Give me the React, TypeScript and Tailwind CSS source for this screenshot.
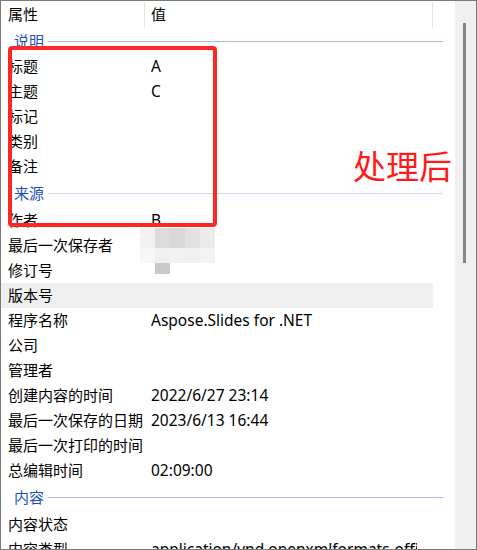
type Item = { label: string; value?: string; active?: boolean };
type Group = { title: string; line: string; first?: boolean; items: Item[] };

const groups: Group[] = [
  {
    title: "说明",
    line: "bg-[#a9bce6]",
    first: true,
    items: [
      { label: "标题", value: "A" },
      { label: "主题", value: "C" },
      { label: "标记" },
      { label: "类别" },
      { label: "备注" },
    ],
  },
  {
    title: "来源",
    line: "bg-[#cdd9ee]",
    items: [
      { label: "作者", value: "B" },
      { label: "最后一次保存者" },
      { label: "修订号" },
      { label: "版本号", active: true },
      { label: "程序名称", value: "Aspose.Slides for .NET" },
      { label: "公司" },
      { label: "管理者" },
      { label: "创建内容的时间", value: "2022/6/27 23:14" },
      { label: "最后一次保存的日期", value: "2023/6/13 16:44" },
      { label: "最后一次打印的时间" },
      { label: "总编辑时间", value: "02:09:00" },
    ],
  },
  {
    title: "内容",
    line: "bg-[#a9bce6]",
    items: [
      { label: "内容状态" },
      {
        label: "内容类型",
        value:
          "application/vnd.openxmlformats-officedocument.presentationml.presentation",
      },
    ],
  },
];

const Row = ({ label, value, active }: Item) => (
  <div
    className={`flex h-[25px] w-[432px] items-center ${
      active ? "bg-[#efefef]" : ""
    }`}
  >
    <span className="w-[150px] shrink-0 whitespace-nowrap pl-[7px]">{label}</span>
    <span className="mr-[16px] min-w-0 flex-1 overflow-hidden whitespace-nowrap font-['Noto_Sans','Noto_Sans_CJK_SC',sans-serif] text-[15.5px]">
      {value}
    </span>
  </div>
);

const GroupHeader = ({ title, line, first }: Group) => (
  <div className={`flex w-[442px] items-center ${first ? "h-[26px]" : "h-[29px]"}`}>
    <span className="whitespace-nowrap pl-[13px] text-[#1d4fc4]">{title}</span>
    <div className={`ml-[4px] h-px flex-1 ${line}`} />
  </div>
);

// mosaic that hides the author name / revision number
const mosaic = [
  ["bg-[#f1f1f1]", "bg-[#dcdcdc]", "bg-[#d9d9da]", "bg-[#e2e2e4]", "bg-[#ebebeb]"],
  ["bg-[#f7f7f7]", "bg-[#f0f0f0]", "bg-[#f1f1f1]", "bg-[#f0f0f0]", "bg-[#f3f3f3]"],
];

export default function App() {
  return (
    <div className="relative h-[550px] w-[477px] overflow-hidden border border-[#7a7a7a] bg-white font-['Noto_Sans_CJK_SC','Noto_Sans',sans-serif] text-[15px] text-black">
      <div className="flex h-full">
        <div className="w-[454px] shrink-0">
          <div className="flex h-[27px] w-[432px] items-center">
            <span className="w-[143px] shrink-0 pl-[7px]">属性</span>
            <div className="h-[25px] w-px bg-[#e3e3e3]" />
            <span className="flex-1 pl-[6px]">值</span>
            <div className="h-[25px] w-px bg-[#e3e3e3]" />
          </div>

          {groups.map((g) => (
            <div key={g.title}>
              <GroupHeader {...g} />
              {g.items.map((it) => (
                <Row key={it.label} {...it} />
              ))}
            </div>
          ))}
        </div>

        <div className="w-[21px] shrink-0 bg-[#f0f0f0]">
          <div className="ml-[8px] mt-[22px] h-[240px] w-[3px] bg-[#858585]" />
        </div>
      </div>

      <div className="absolute left-[139px] top-[227px] flex flex-col">
        {mosaic.map((r, i) => (
          <div key={i} className={`flex ${i === 0 ? "h-[20px]" : "h-[15px]"}`}>
            {r.map((c, j) => (
              <div key={j} className={`h-full w-[15px] ${c}`} />
            ))}
          </div>
        ))}
        <div className="ml-[15px] h-[11px] w-[15px] bg-[#c9c9c9]" />
      </div>

      <div className="absolute left-[7px] top-[45px] h-[181px] w-[209px] rounded-[4px] border-4 border-[#ff2626]" />

      <div className="absolute left-[352px] top-[148px] text-[33px] leading-none text-[#ff1a1a]">
        处理后
      </div>
    </div>
  );
}
